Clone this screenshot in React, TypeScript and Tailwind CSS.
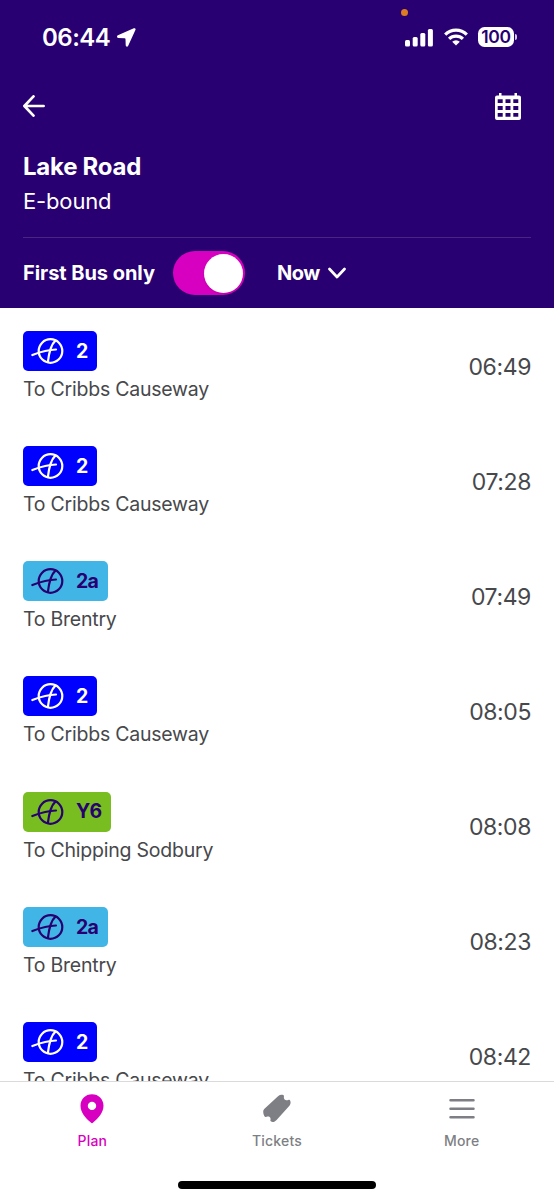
import React from 'react';

interface Departure {
  route: string;
  destination: string;
  time: string;
  badge: string;
}

const blue = 'bg-[#0000ff] text-white';
const sky = 'bg-[#41b6e6] text-[#280071]';
const green = 'bg-[#78be20] text-[#280071]';

const departures: Departure[] = [
  { route: '2', destination: 'To Cribbs Causeway', time: '06:49', badge: blue },
  { route: '2', destination: 'To Cribbs Causeway', time: '07:28', badge: blue },
  { route: '2a', destination: 'To Brentry', time: '07:49', badge: sky },
  { route: '2', destination: 'To Cribbs Causeway', time: '08:05', badge: blue },
  { route: 'Y6', destination: 'To Chipping Sodbury', time: '08:08', badge: green },
  { route: '2a', destination: 'To Brentry', time: '08:23', badge: sky },
  { route: '2', destination: 'To Cribbs Causeway', time: '08:42', badge: blue },
];

const BusLogo: React.FC = () => (
  <svg width="34" height="30" viewBox="0 0 34 30" fill="none" stroke="currentColor" strokeWidth="2.2" strokeLinecap="round">
    <circle cx="19.5" cy="15" r="11.8" />
    <path d="M1.4 19C8 16.4 16 13.6 25 13.5" />
    <path d="M24.4 4.6C20.6 8 18 16.5 16.9 25.8" />
  </svg>
);

const StatusBar: React.FC = () => (
  <div className="relative flex h-[74px] items-center justify-between pr-[37px] pl-[42px]">
    <div className="absolute top-[9px] left-[401px] h-[7px] w-[7px] rounded-full bg-[#dd7d22]" />
    <div className="flex items-center gap-[7px]">
      <span className="pt-[2px] text-[24px] leading-none font-semibold tracking-[-0.5px]">06:44</span>
      <svg width="19" height="19" viewBox="0 0 19 19" fill="currentColor">
        <path d="M16.8.3.9 7.3C-.5 8-.2 9.8 1.3 9.9l6.3.3c.6 0 .9.3.9.9l.2 6.2c.1 1.500 1.800 1.900 2.500.5L18.400 2.100C19 .9 18-.2 16.800.3Z" />
      </svg>
    </div>
    <div className="flex items-center">
      <svg width="28" height="19" viewBox="0 0 28 19" fill="currentColor">
        <rect x="0" y="12" width="5" height="6.5" rx="1.5" />
        <rect x="7.7" y="9" width="5" height="9.5" rx="1.5" />
        <rect x="15.3" y="5" width="5" height="13.5" rx="1.5" />
        <rect x="22.9" y="1" width="5" height="17.5" rx="1.5" />
      </svg>
      <svg className="ml-[11px]" width="24" height="18" viewBox="0 0 24 18" fill="none" stroke="currentColor" strokeWidth="3.2">
        <path d="M1.200 6.600a15.400 15.400 0 0 1 21.600 0" />
        <path d="M5.100 10.900a9.800 9.800 0 0 1 13.800 0" />
        <path d="M12 17.600 8.200 13.700a5.500 5.500 0 0 1 7.600 0Z" fill="currentColor" stroke="none" />
      </svg>
      <div className="ml-[10px] flex h-[20px] w-[36px] items-center justify-center rounded-[6.5px] bg-white">
        <span className="text-[17.5px] leading-none font-semibold tracking-[-0.3px] text-[#280071]">100</span>
      </div>
      <div className="ml-px h-[6px] w-[2px] rounded-r-full bg-white/80" />
    </div>
  </div>
);

const Header: React.FC = () => (
  <header className="h-[308px] shrink-0 bg-[#280071] text-white">
    <StatusBar />
    <div className="flex h-[66px] items-center justify-between pr-[33px] pb-[2px] pl-[23px]">
      <svg width="22" height="22" viewBox="0 0 22 22" fill="none" stroke="currentColor" strokeWidth="2.7" strokeLinecap="round" strokeLinejoin="round">
        <path d="M20.600 11H1.600M10.500 1.400 1.400 11l9.100 9.600" />
      </svg>
      <svg width="26" height="27" viewBox="0 0 26 27">
        <path
          fill="currentColor"
          fillRule="evenodd"
          d="M4 0h2.500v2.500h13V0H22v2.500h2a2 2 0 0 1 2 2V25a2 2 0 0 1-2 2H2a2 2 0 0 1-2-2V4.500a2 2 0 0 1 2-2h2ZM2.700 6.200h5v3.800h-5ZM10.500 6.200h5v3.800h-5ZM18.300 6.200h5v3.800h-5ZM2.700 13h5v4h-5ZM10.500 13h5v4h-5ZM18.300 13h5v4h-5ZM2.700 20h5v3.800h-5ZM10.500 20h5v3.800h-5ZM18.300 20h5v3.800h-5Z"
        />
      </svg>
    </div>
    <div className="mx-[23px] h-[98px] border-b border-[#482682] pt-[10px]">
      <h1 className="text-[24px] leading-[34px] font-bold tracking-[-0.25px]">Lake Road</h1>
      <p className="text-[22px] leading-[34px] tracking-[-0.15px]">E-bound</p>
    </div>
    <div className="flex h-[70px] items-center pl-[23px]">
      <span className="w-[150px] text-[20px] font-bold tracking-[-0.05px]">First Bus only</span>
      <div className="flex h-[44px] w-[72px] items-center justify-end rounded-full bg-[#d800c0] pr-[2px]">
        <div className="h-[39px] w-[39px] rounded-full bg-white shadow-sm" />
      </div>
      <span className="ml-[32px] text-[20px] font-bold tracking-[-0.5px]">Now</span>
      <svg className="ml-[8px]" width="18" height="12" viewBox="0 0 18 12" fill="none" stroke="currentColor" strokeWidth="2.7" strokeLinecap="round" strokeLinejoin="round">
        <path d="m1.500 2 7.500 8 7.500-8" />
      </svg>
    </div>
  </header>
);

const DepartureRow: React.FC<{ departure: Departure }> = ({ departure }) => (
  <li className="flex h-[115.15px] shrink-0 items-start justify-between px-[23px] pt-[23px]">
    <div>
      <div className={`flex h-[40px] w-fit items-center rounded-[5px] pr-[9.5px] pl-[8px] ${departure.badge}`}>
        <BusLogo />
        <span className="ml-[11px] pt-px text-[19.5px] font-bold tracking-[-0.7px]">{departure.route}</span>
      </div>
      <p className="text-[19.5px] leading-[36px] tracking-[-0.23px]">{departure.destination}</p>
    </div>
    <span className="mt-[17.5px] text-[23px] leading-[36px] tracking-[-0.4px]">{departure.time}</span>
  </li>
);

const TabBar: React.FC = () => (
  <nav className="relative grid h-[119px] shrink-0 grid-cols-3 border-t border-[#dadada] bg-white text-[14px] font-medium tracking-[0.2px] text-[#7e7f84]">
    <div className="flex flex-col items-center pt-[12px] text-[#d800c0]">
      <svg width="24" height="30" viewBox="0 0 24 30" fill="currentColor" fillRule="evenodd">
        <path d="M12 .3C5.400.3.500 5.200.500 11.700c0 6.600 5 12.200 10.300 16.900a1.800 1.800 0 0 0 2.400 0c5.300-4.700 10.300-10.300 10.300-16.900C23.500 5.200 18.600.3 12 .3Zm0 7.400a4.200 4.200 0 1 1 0 8.400 4.200 4.200 0 0 1 0-8.400Z" />
      </svg>
      <span className="mt-[6px]">Plan</span>
    </div>
    <div className="flex flex-col items-center pt-[12px]">
      <svg width="28" height="30" viewBox="0 0 28 30" fill="currentColor">
        <path d="M1.200 14.900 15.300 1.900c1.500-1.300 3.500-1.600 5-.8.700.4.700 1.100.6 1.900-.2 1.400.4 2.600 1.700 3.100.9.400 1.800.3 2.700-.1 1-.5 1.600-.2 2 .9.6 1.700.2 3.600-1.100 5L13.600 25.900c-1.600 1.800-3.700 2.500-5.500 1.700-.9-.4-.8-1-.6-1.900.3-1.400-.3-2.600-1.600-3.100-.8-.3-1.600-.2-2.400.2-1 .5-1.700.2-2.200-.8-1.200-2.300-1.700-5.400-.1-7.100Z" />
      </svg>
      <span className="mt-[6px]">Tickets</span>
    </div>
    <div className="flex flex-col items-center pt-[12px]">
      <svg width="26" height="30" viewBox="0 0 26 30" fill="none" stroke="currentColor" strokeWidth="2.5" strokeLinecap="round">
        <path d="M1.500 6.300h23M1.500 14.800h23M1.500 23.300h23" />
      </svg>
      <span className="mt-[6px]">More</span>
    </div>
    <div className="absolute bottom-[11px] left-[178px] h-[8px] w-[198px] rounded-full bg-black" />
  </nav>
);

const App: React.FC = () => {
  return (
    <div className="flex h-[1200px] w-[554px] flex-col overflow-hidden bg-white font-['Inter',sans-serif] text-[#47484b]">
      <Header />
      <ul className="flex h-[773px] shrink-0 flex-col overflow-hidden">
        {departures.map((departure) => (
          <DepartureRow key={departure.time} departure={departure} />
        ))}
      </ul>
      <TabBar />
    </div>
  );
};

export default App;
